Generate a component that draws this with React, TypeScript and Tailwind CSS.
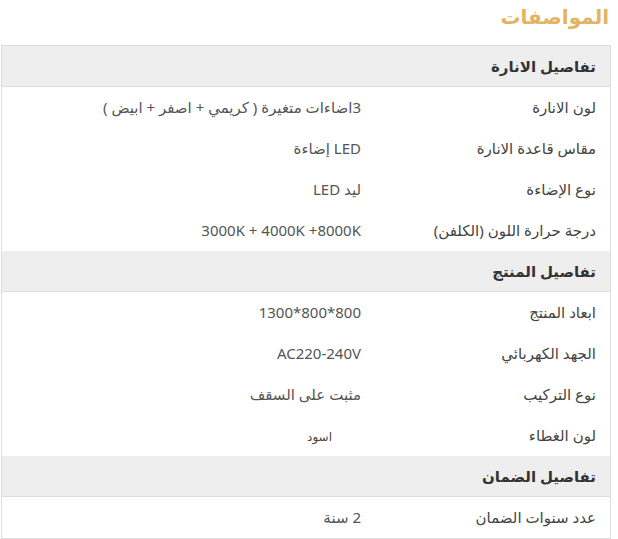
const sections = [
  {
    title: "تفاصيل الانارة",
    rows: [
      ["لون الانارة", "3اضاءات متغيرة ( كريمي + اصفر + ابيض )"],
      ["مقاس قاعدة الانارة", "LED إضاءة"],
      ["نوع الإضاءة", "ليد LED"],
      ["درجة حرارة اللون (الكلفن)", "3000K + 4000K +8000K"],
    ],
  },
  {
    title: "تفاصيل المنتج",
    rows: [
      ["ابعاد المنتج", "1300*800*800"],
      ["الجهد الكهربائي", "AC220-240V"],
      ["نوع التركيب", "مثبت على السقف"],
      ["لون الغطاء", "اسود"],
    ],
  },
  {
    title: "تفاصيل الضمان",
    rows: [["عدد سنوات الضمان", "2 سنة"]],
  },
];

function Value({ v }: { v: string }) {
  if (v === "اسود") return <span className="pr-[29px] text-[12px] text-[#4d4530]">{v}</span>;
  if (v.includes("*")) return <span dir="ltr">{v}</span>;
  return <>{v}</>;
}

export default function App() {
  return (
    <div dir="rtl" className="w-[618px] h-[539px] bg-white pl-px pr-[7px] font-['Noto_Sans','DejaVu_Sans',sans-serif]">
      <h2 className="h-[45px] pr-[2px] pt-[3px] text-[20px] font-bold leading-[28px] text-[#e2b461]">المواصفات</h2>
      <div className="border border-[#dddddd]">
        {sections.map((s) => (
          <div key={s.title}>
            <div className="flex h-[41px] items-center border-b border-[#dddddd] bg-[#eeeeee] pr-[14px] text-[15px] font-bold text-[#333333]">
              {s.title}
            </div>
            {s.rows.map(([label, value]) => (
              <div key={label} className="flex h-[41px] items-center text-[15px] text-[#555555]">
                <div className="w-[249px] shrink-0 pr-[14px] text-[#444444]">{label}</div>
                <div className="flex-1">
                  <Value v={value} />
                </div>
              </div>
            ))}
          </div>
        ))}
      </div>
    </div>
  );
}
